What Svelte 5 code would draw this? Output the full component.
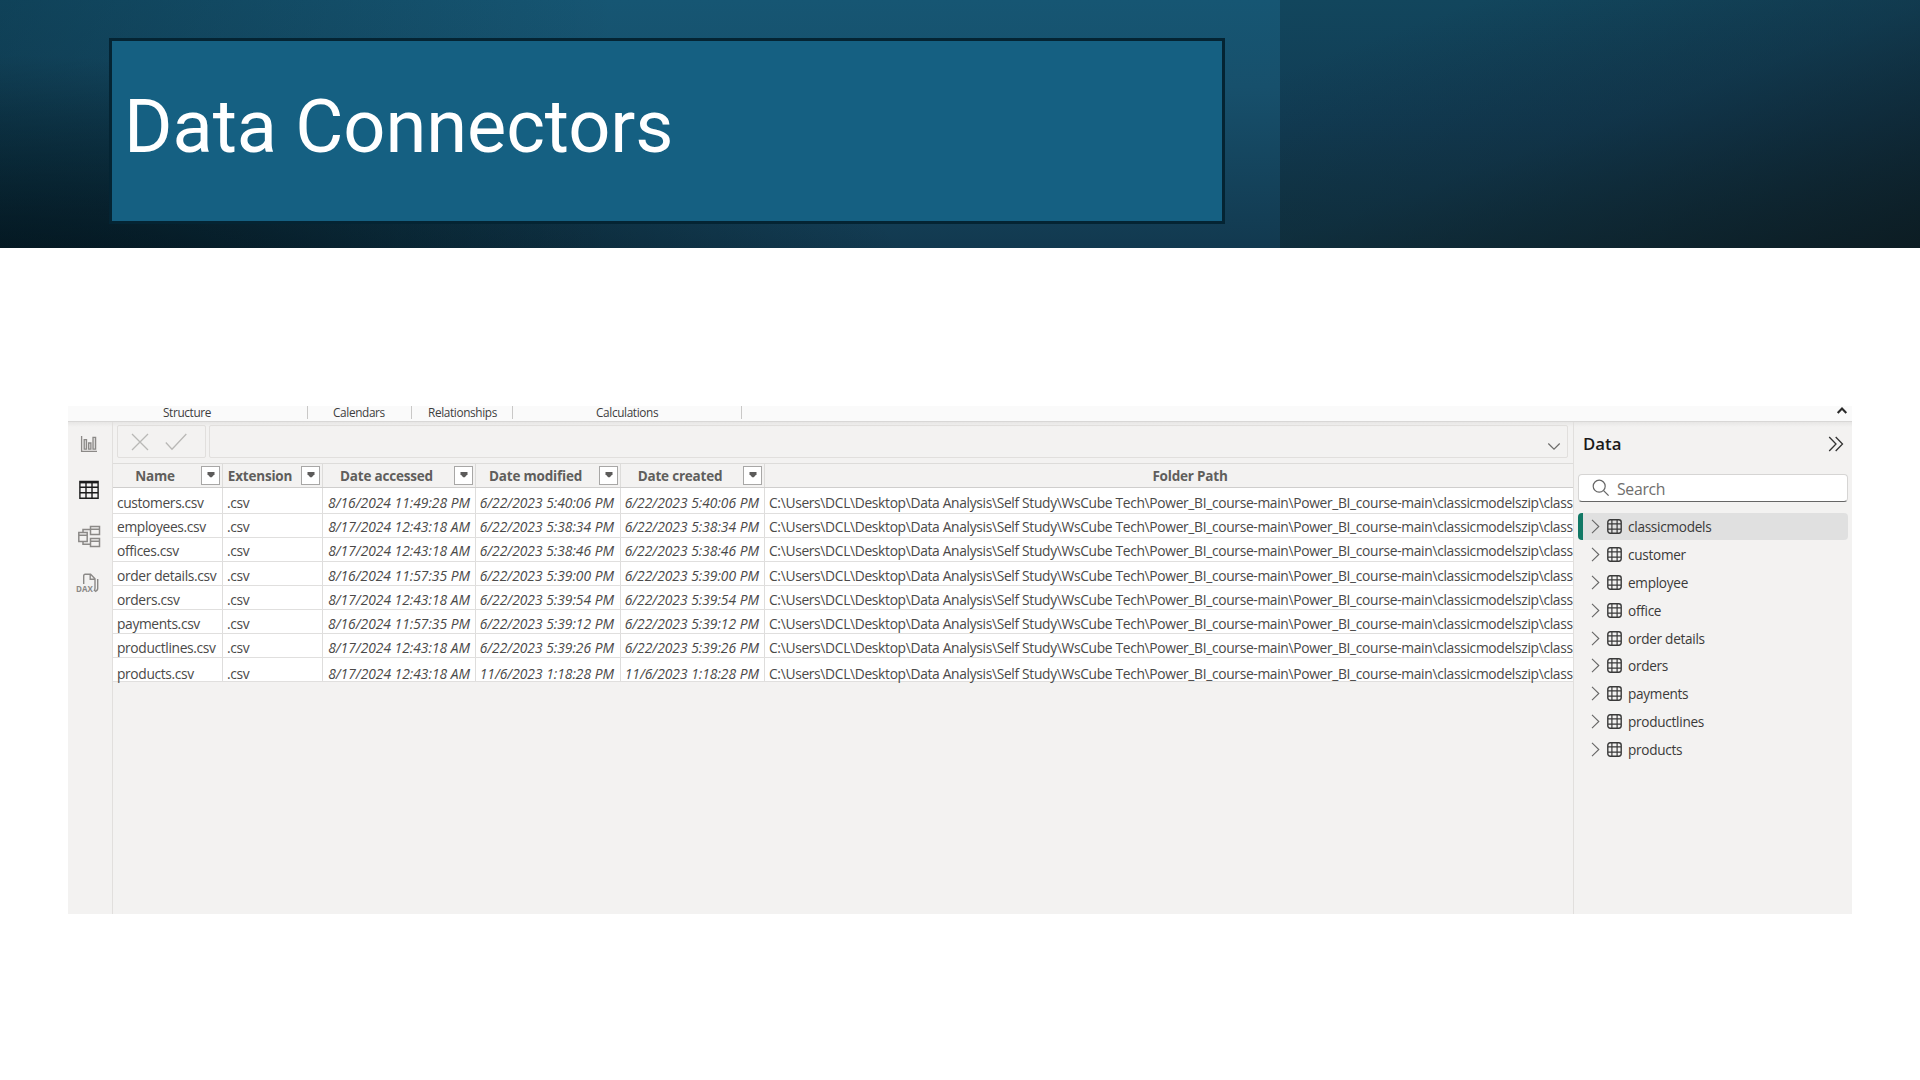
<script>
  const path =
    'C:\\Users\\DCL\\Desktop\\Data Analysis\\Self Study\\WsCube Tech\\Power_BI_course-main\\Power_BI_course-main\\classicmodelszip\\class';

  const columns = [
    { label: 'Name', filter: true },
    { label: 'Extension', filter: true },
    { label: 'Date accessed', filter: true },
    { label: 'Date modified', filter: true },
    { label: 'Date created', filter: true },
    { label: 'Folder Path', filter: false }
  ];

  // pad: space above the text line inside the row
  const rows = [
    { name: 'customers', accessed: '8/16/2024 11:49:28 PM', modified: '6/22/2023 5:40:06 PM', pad: 6 },
    { name: 'employees', accessed: '8/17/2024 12:43:18 AM', modified: '6/22/2023 5:38:34 PM', pad: 4 },
    { name: 'offices', accessed: '8/17/2024 12:43:18 AM', modified: '6/22/2023 5:38:46 PM', pad: 4 },
    { name: 'order details', accessed: '8/16/2024 11:57:35 PM', modified: '6/22/2023 5:39:00 PM', pad: 5 },
    { name: 'orders', accessed: '8/17/2024 12:43:18 AM', modified: '6/22/2023 5:39:54 PM', pad: 5 },
    { name: 'payments', accessed: '8/16/2024 11:57:35 PM', modified: '6/22/2023 5:39:12 PM', pad: 5 },
    { name: 'productlines', accessed: '8/17/2024 12:43:18 AM', modified: '6/22/2023 5:39:26 PM', pad: 5 },
    { name: 'products', accessed: '8/17/2024 12:43:18 AM', modified: '11/6/2023 1:18:28 PM', pad: 7 }
  ];

  const tables = [
    'classicmodels', 'customer', 'employee', 'office', 'order details',
    'orders', 'payments', 'productlines', 'products'
  ];
</script>

<div class="slide">
  <header class="hero">
    <div class="hero-main">
      <h1>Data Connectors</h1>
    </div>
    <div class="hero-side"></div>
  </header>

  <main class="app">
    <div class="ribbon">
      <span class="group structure">Structure</span>
      <span class="group calendars">Calendars</span>
      <span class="group relationships">Relationships</span>
      <span class="group calculations">Calculations</span>
      <svg class="collapse" width="12" height="9" viewBox="0 0 12 9"><path d="M1.7 7 6 2.6 10.3 7" fill="none" stroke="#2b2b2b" stroke-width="2.1" /></svg>
    </div>

    <div class="body">
      <nav class="rail">
        <svg width="18" height="18" viewBox="0 0 18 18" fill="none" stroke="#8b8987" stroke-width="1.3">
          <path d="M1.6 1v15.4H17" />
          <path d="M4.2 4.6h2.3v9.6H4.2zM8.6 8h2.3v6.2H8.6zM13 2.4h2.6v11.8H13z" fill="#dddcdb" />
        </svg>
        <svg width="20" height="20" viewBox="0 0 20 20" fill="none" stroke="#1b1b1b" stroke-width="1.4">
          <path d="M.9 1.5h18.2v16.8H.9z" /><path d="M.9 2.2h18.2" stroke-width="2.4" />
          <path d="M.9 7.2h18.2M.9 12.7h18.2M7 3v15.3M13 3v15.3" />
        </svg>
        <svg width="24" height="24" viewBox="0 0 24 24" fill="none" stroke="#8b8987" stroke-width="1.5">
          <path d="M1.8 7.5h8.4v9H1.8zM1.8 10.3h8.4M13.5 1.5h9v8h-9zM13.5 4.3h9M13.5 13.5h9v8h-9zM13.5 16.3h9M6 7.5v-3h7.5M6 16.5v2.8h7.5" />
        </svg>
        <div class="dax">
          <svg width="22" height="20" viewBox="0 0 22 20" fill="none" stroke="#8b8987" stroke-width="1.4">
            <path d="M5.7 11V2.8Q5.7 1.3 7.2 1.3h5.4L17 5.8V15q0 2-1 3M12.2 1.5v4.8h4.6M19.7 6v9.5q0 2-2.7 3" />
          </svg>
          <span>DAX</span>
        </div>
      </nav>

      <section class="data-view">
        <div class="formula">
          <div class="actions">
            <svg width="18" height="18" viewBox="0 0 18 18"><path d="M1 1 17 17M17 1 1 17" fill="none" stroke="#b9b8b6" stroke-width="1.3" /></svg>
            <svg width="22" height="18" viewBox="0 0 22 18"><path d="M.8 9.5 7 16.2 21.3 1" fill="none" stroke="#b9b8b6" stroke-width="1.3" /></svg>
          </div>
          <div class="input">
            <svg width="14" height="9" viewBox="0 0 14 9"><path d="M1.3 1.5 7 7.2 12.7 1.5" fill="none" stroke="#6d6c6a" stroke-width="1.2" /></svg>
          </div>
        </div>

        <div class="grid head">
          {#each columns as col}
            <div class="th">
              <span>{col.label}</span>
              {#if col.filter}
                <i class="filter"><svg width="8" height="6" viewBox="0 0 8 6"><path d="M.5 0h7v2.3L4.8 5.2H3.2L.5 2.3z" fill="#5c5b5a" /></svg></i>
              {/if}
            </div>
          {/each}
        </div>
        {#each rows as row}
          <div class="grid row">
            <div class="td name" style:padding-top="{row.pad}px">{row.name}.csv</div>
            <div class="td name" style:padding-top="{row.pad}px">.csv</div>
            <div class="td date" style:padding-top="{row.pad}px">{row.accessed}</div>
            <div class="td date modified" style:padding-top="{row.pad}px">{row.modified}</div>
            <div class="td date" style:padding-top="{row.pad}px">{row.modified}</div>
            <div class="td path" style:padding-top="{row.pad}px">{path}</div>
          </div>
        {/each}
      </section>

      <aside class="pane">
        <div class="pane-head">
          <h2>Data</h2>
          <svg width="16" height="16" viewBox="0 0 16 16"><path d="M1.2 1 8 8l-6.8 7M7.7 1l6.8 7-6.8 7" fill="none" stroke="#333" stroke-width="1.3" /></svg>
        </div>
        <div class="search">
          <svg width="18" height="18" viewBox="0 0 18 18"><circle cx="7.2" cy="7.2" r="6" fill="none" stroke="#666" stroke-width="1.2" /><path d="m11.6 11.6 5 5" stroke="#666" stroke-width="1.3" /></svg>
          <span>Search</span>
        </div>
        <ul>
          {#each tables as table, i}
            <li class:selected={i === 0}>
              <svg class="chev" width="9" height="15" viewBox="0 0 9 15"><path d="M1 .9 7.8 7.5 1 14.1" fill="none" stroke="#666" stroke-width="1.1" /></svg>
              <svg class="icon" width="15" height="15" viewBox="0 0 15 15" fill="none" stroke="#3a3a3a">
                <rect x=".8" y=".8" width="13.4" height="13.4" rx="2.4" stroke-width="1.4" />
                <path d="M4.9 1v13M10.1 1v13M1 4.9h13M1 10.1h13" stroke-width="1.2" />
              </svg>
              <span>{table}</span>
            </li>
          {/each}
        </ul>
      </aside>
    </div>
  </main>
</div>

<style>
  :global(body) { margin: 0; background: #fff; }
  * { box-sizing: border-box; }
  svg { display: block; flex: none; }
  .slide {
    width: 1920px;
    height: 1080px;
    overflow: hidden;
    background: #fff;
    font-family: 'Open Sans', 'Noto Sans', sans-serif;
    color: #4a4948;
  }

  .hero { display: flex; height: 248px; }
  .hero-main {
    width: 1280px;
    padding: 38px 0 0 109px;
    background:
      linear-gradient(90deg, rgba(4, 30, 42, 0.36), rgba(4, 30, 42, 0) 48%),
      radial-gradient(ellipse 950px 220px at -40px 275px, rgba(2, 14, 20, 0.95) 0%, rgba(4, 24, 32, 0.55) 50%, rgba(5, 28, 40, 0) 100%),
      linear-gradient(180deg, #165673 0%, #17506c 35%, #12394f 100%);
  }
  .hero-side {
    flex: 1;
    background:
      linear-gradient(160deg, rgba(14, 40, 56, 0) 15%, rgba(16, 40, 56, 0.4) 50%, rgba(12, 26, 32, 0.9) 100%),
      linear-gradient(180deg, #12465d 0%, #113c54 50%, #0f323f 100%);
  }
  h1 {
    width: 1116px;
    height: 186px;
    margin: 0;
    padding: 41px 0 0 12px;
    border: 3px solid #042433;
    background: #156082;
    color: #fff;
    font: 400 74px/90px Roboto, sans-serif;
    letter-spacing: -0.08px;
  }

  .app {
    width: 1784px;
    height: 508px;
    margin: 158px 0 0 68px;
    background: #f3f2f1;
  }
  .ribbon {
    display: flex;
    height: 16px;
    background: #fafafa;
    border-bottom: 1px solid #d8d7d6;
  }
  .group {
    height: 13px;
    border-right: 1px solid #c9c8c7;
    font-size: 11.8px;
    line-height: 13px;
    letter-spacing: -0.36px;
    color: #3d3d3d;
    white-space: nowrap;
  }
  .structure { width: 240px; padding-left: 95px; }
  .calendars { width: 104px; padding-left: 25px; }
  .relationships { width: 101px; padding-left: 16px; }
  .calculations { width: 229px; padding-left: 83px; }
  .collapse { margin: 0 4px 0 auto; }

  .body {
    display: flex;
    height: 492px;
    background: linear-gradient(180deg, #e7e6e5 0, #f3f2f1 5px);
  }
  .rail {
    display: flex;
    flex-direction: column;
    align-items: center;
    width: 45px;
    padding: 13px 2px 0 0;
    border-right: 1px solid #e1dfdd;
  }
  .rail svg:nth-child(2) { margin-top: 27px; }
  .rail svg:nth-child(3) { margin-top: 25px; }
  .dax { width: 22px; margin: 24px 0 0; }
  .dax span {
    display: block;
    margin: -8px 0 0 -2px;
    font: 700 8px/8px 'Open Sans', sans-serif;
    color: #8b8987;
  }

  .data-view { width: 1460px; overflow: hidden; }
  .formula { display: flex; gap: 3px; height: 41px; padding: 3px 5px 5px 4px; }
  .actions, .input { display: flex; height: 33px; border: 1px solid #e1dfdd; border-radius: 2px; }
  .actions { width: 89px; gap: 16px; padding: 7px 0 0 13px; }
  .input { flex: 1; justify-content: flex-end; padding: 16px 6px 0 0; }

  .grid { display: grid; grid-template-columns: 110px 100px 153px 145px 144px 1fr; }
  .head { height: 25px; border-top: 1px solid #dddcda; border-bottom: 1px solid #cfcecd; }
  .th {
    display: flex;
    align-items: center;
    padding-right: 2px;
    border-right: 1px solid #dddcda;
    font-size: 13.5px;
    font-weight: 700;
    letter-spacing: -0.2px;
    line-height: 20px;
    color: #605e5c;
  }
  .th:last-child { padding: 0 0 0 46px; border: 0; }
  .th span { flex: 1; padding-right: 4px; text-align: center; }
  .filter {
    display: flex;
    justify-content: center;
    width: 19px;
    height: 19px;
    padding-top: 5px;
    border: 1px solid #a8a7a6;
    background: #fff;
  }
  .row {
    grid-template-rows: 100%;
    height: 24px;
    background: #fff;
    border-bottom: 1px solid #e0dfde;
  }
  .head + .row { height: 26px; }
  .td {
    height: 100%;
    padding-left: 4px;
    border-right: 1px solid #dedddc;
    font-size: 13.8px;
    line-height: 18px;
    white-space: nowrap;
  }
  .name { letter-spacing: -0.36px; }
  .date { padding: 0 5px 0 0; text-align: right; font-style: italic; }
  .modified { padding-right: 6px; }
  .path { letter-spacing: -0.325px; border: 0; }

  .pane { width: 279px; padding: 0 4px 0 4px; border-left: 1px solid #e1dfdd; }
  .pane-head {
    display: flex;
    align-items: center;
    justify-content: space-between;
    height: 44px;
    padding: 0 4px 0 5px;
  }
  h2 { margin: 0; font-size: 16.8px; font-weight: 600; line-height: 24px; color: #1b1a19; }
  .search {
    display: flex;
    align-items: center;
    gap: 7px;
    width: 270px;
    height: 28px;
    margin-top: 8px;
    padding-left: 13px;
    border: 1px solid #d6d5d4;
    border-bottom-color: #666;
    border-radius: 4px;
    background: #fff;
    font-size: 15.8px;
    letter-spacing: -0.3px;
    color: #6f6e6d;
  }
  .search span { padding-top: 2px; }
  ul { margin: 10.5px 0 0; padding: 0; list-style: none; }
  li {
    display: flex;
    align-items: center;
    width: 270px;
    height: 27.9px;
    padding-left: 13px;
    border-radius: 4px;
    font-size: 13.6px;
    letter-spacing: -0.28px;
    color: #3b3a39;
  }
  .selected { padding-left: 8px; border-left: 5px solid #117865; background: #e0e0e0; }
  .icon { margin: 0 6px 0 7px; }
</style>
